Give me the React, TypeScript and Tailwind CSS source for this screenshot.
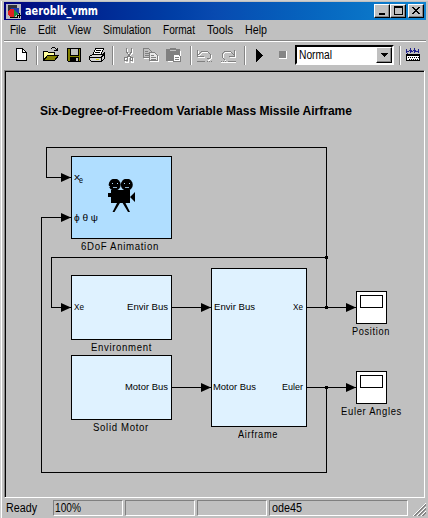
import React, { useLayoutEffect, useRef, useState } from "react";

type FitProps = { width: number; className?: string; children: React.ReactNode };

/** Single line of text, condensed or widened to an exact width. */
function Fit({ width, className = "", children }: FitProps) {
  const ref = useRef<HTMLSpanElement>(null);
  const [scale, setScale] = useState(1);
  useLayoutEffect(() => {
    if (ref.current && ref.current.offsetWidth) {
      const range = document.createRange();
      range.selectNodeContents(ref.current);
      const current = range.getBoundingClientRect().width;
      if (current) setScale((s) => (s * width) / current);
    }
  }, [width]);
  return (
    <span className={`block whitespace-nowrap ${className}`} style={{ width }}>
      <span ref={ref} className="inline-block origin-left" style={{ transform: `scaleX(${scale})` }}>
        {children}
      </span>
    </span>
  );
}

const menus: [string, number][] = [
  ["File", 16], ["Edit", 18], ["View", 23], ["Simulation", 48], ["Format", 32], ["Tools", 26], ["Help", 22],
];

const blocks = [
  { id: "anim", x: 71, y: 156, w: 101, h: 83, fill: "bg-[#b0deff]" },
  { id: "env", x: 71, y: 275, w: 101, h: 65, fill: "bg-[#dff2ff]" },
  { id: "motor", x: 71, y: 355, w: 101, h: 65, fill: "bg-[#dff2ff]" },
  { id: "airframe", x: 211, y: 268, w: 96, h: 159, fill: "bg-[#dff2ff]" },
  { id: "position", x: 356, y: 291, w: 31, h: 33, fill: "bg-white", scope: true },
  { id: "euler", x: 356, y: 371, w: 31, h: 33, fill: "bg-white", scope: true },
];

const labels = [
  { text: "6DoF Animation", x: 81, base: 250, w: 78, name: true },
  { text: "Environment", x: 91, base: 351, w: 61, name: true },
  { text: "Solid Motor", x: 93, base: 431, w: 56, name: true },
  { text: "Airframe", x: 238, base: 438, w: 40, name: true },
  { text: "Position", x: 352, base: 335, w: 38, name: true },
  { text: "Euler Angles", x: 341, base: 415, w: 61, name: true },
  { text: "Xe", x: 74, base: 310, w: 10 },
  { text: "Envir Bus", x: 127, base: 310, w: 41 },
  { text: "Motor Bus", x: 125, base: 390, w: 43 },
  { text: "Envir Bus", x: 214, base: 310, w: 41 },
  { text: "Motor Bus", x: 213, base: 390, w: 43 },
  { text: "Xe", x: 293, base: 310, w: 10 },
  { text: "Euler", x: 282, base: 390, w: 21 },
  { text: "x", x: 74, base: 180, w: 6 },
  { text: "e", x: 79, base: 183, w: 4 },
  { text: "ϕ θ ψ", x: 74, base: 221, w: 24 },
];

const arrows: [number, number][] = [[71, 177], [71, 217], [71, 307], [211, 307], [211, 387], [356, 307], [356, 387]];

function Wires() {
  return (
    <svg className="absolute inset-0" width="419" height="425" viewBox="6 72 419 425">
      <g fill="none" stroke="#000" shapeRendering="crispEdges">
        <path d="M326.5 307V147.5H46.5V177.5H71M326.5 257.5H51.5V307.5H71M171 307.5H211M171 387.5H211M306 307.5H356M306 387.5H356M326.5 387V472.5H41.5V217.5H71" />
      </g>
      {arrows.map(([x, y]) => (
        <path key={`${x}-${y}`} d={`M${x - 10} ${y - 4}L${x} ${y + 0.5}L${x - 10} ${y + 5}Z`} />
      ))}
      <path d="M325 256h3v3h-3zM325 306h3v3h-3zM325 386h3v3h-3z" />
    </svg>
  );
}

function Camera() {
  return (
    <svg className="absolute left-[36px] top-[22px]" width="29" height="35" viewBox="108 179 29 35">
      <circle cx="114.7" cy="184.7" r="6" />
      <circle cx="126.8" cy="184.7" r="6" />
      <path d="M111 190h19v13h-19zM108 193h4v4h-4zM130 197l5-5v10zM117.500 202h3l-6 10h-2zM122 202h3l5 10h-2z" />
      <path d="M113 187.500h4M125 187.500h4M108 186.500h2" stroke="#b0deff" strokeWidth="0.8" />
      <path d="M112 183h1v1h-1zM117 183h1v1h-1zM124 183h1v1h-1zM129 183h1v1h-1z" fill="#b0deff" />
    </svg>
  );
}

function Icon({ x, w, className = "", children }: { x: number; w: number; className?: string; children: React.ReactNode }) {
  return (
    <svg className={`shrink-0 ${className}`} width={w} height="18" viewBox={`${x} 46 ${w} 18`} shapeRendering="crispEdges" fill="none">
      {children}
    </svg>
  );
}

function Separator({ className }: { className: string }) {
  return <div className={`h-[19px] w-[2px] shrink-0 border-l border-r border-l-[#858585] border-r-white ${className}`} />;
}

function Toolbar() {
  return (
    <div className="flex h-[27px] items-center pb-px pl-[12px]">
      <Icon x={16} w={12}>
        <path d="M16.5 48.5h6l4 4v8h-10z" fill="#fff" stroke="#000" />
        <path d="M22.5 48.5v4h4" stroke="#000" />
      </Icon>
      <Separator className="ml-[8px]" />
      <Icon x={44} w={16} className="ml-[5px]">
        <path d="M44.5 59.5v-8h4l1 1h6v3" fill="#ffff9c" stroke="#000" />
        <path d="M44.5 60.5l4-5h11l-4 5z" fill="#848200" stroke="#000" />
        <path d="M52 48.5h1M53 47.5h3M56 48.5h1M57 49.5h1M55 50.5h4M58.5 48v3" stroke="#000" />
      </Icon>
      <Icon x={68} w={15} className="ml-[8px]">
        <path d="M68.5 48.5h13v13h-12l-1-1z" fill="#848200" stroke="#000" />
        <path d="M71.5 49v6.5h8v-6.500" fill="#c0c0c0" stroke="#000" />
        <path d="M71 57h9v4h-9z" fill="#000" />
        <path d="M77 58h2v3h-2z" fill="#c0c0c0" />
      </Icon>
      <Icon x={90} w={17} className="ml-[7px]">
        <path d="M96.5 48.5h8l-3 7h-8z" fill="#fff" stroke="#000" />
        <path d="M97 50.500h5M96 52.500h5" stroke="#000" />
        <path d="M90.5 56.5l3-2h10l2-2v6l-3 3h-10l-2-2z" fill="#d4d4d4" stroke="#000" />
        <path d="M91 57.500h11l3-3M93 61.500h9M102.500 57v4" stroke="#000" />
        <path d="M97 59.500h3" stroke="#dada00" />
      </Icon>
      <Separator className="ml-[6px]" />
      <Icon x={124} w={13} className="ml-[9px]">
        <g stroke="#fff" transform="translate(1 1)">
          <path d="M127.500 48v4l4 5M132.500 48v4l-4 5" /><path d="M125.500 57.500h3v4h-3zM131.500 57.500h2v4h-2z" />
        </g>
        <g stroke="#808080">
          <path d="M127.500 48v4l4 5M132.500 48v4l-4 5" /><path d="M125.500 57.500h3v3h-3zM131.500 57.500h2v3h-2z" />
        </g>
      </Icon>
      <Icon x={144} w={17} className="ml-[7px]">
        <g stroke="#fff" transform="translate(1 1)"><path d="M144.500 48.500h5l3 3v6h-8zM150.500 52.500h5l3 3v5h-8z" /></g>
        <path d="M144.500 48.500h5l3 3v6h-8z" fill="#c0c0c0" stroke="#808080" />
        <path d="M146 51.500h3M146 53.500h4M146 55.500h4" stroke="#808080" />
        <path d="M150.500 52.500h5l3 3v5h-8z" fill="#e8e8e8" stroke="#808080" />
        <path d="M152 55.500h3M152 57.500h5M152 59.500h5" stroke="#808080" />
      </Icon>
      <Icon x={167} w={17} className="ml-[6px]">
        <path d="M168 50h4v-2h5v2h4v11h-13z" fill="#fff" transform="translate(1 1)" />
        <path d="M167 49h4v-1h6v1h4v12h-14z" fill="#808080" />
        <path d="M171 50.500h6" stroke="#c0c0c0" />
        <path d="M174.500 54.500h5l2 2v5h-7z" fill="#fff" stroke="#808080" />
        <path d="M176 57.500h4M176 59.500h4" stroke="#808080" />
      </Icon>
      <Separator className="ml-[7px]" />
      <Icon x={197} w={18} className="ml-[4px]">
        <path d="M199.500 51v6h6M200 56l4-4h5l3 3v4l-3 2" stroke="#fff" />
        <path d="M198.500 50v6h6M199 55l4-4h5l3 3v4l-3 1M198 61.500h8M208 61.500h1M210 61.500h1M212 61.500h1" stroke="#808080" />
      </Icon>
      <Icon x={221} w={18} className="ml-[6px]">
        <path d="M236.500 51v6h-6M236 56l-4-4h-5l-3 3v3l3 3M222 62.500h15" stroke="#fff" />
        <path d="M235.500 50v6h-6M235 55l-4-4h-5l-3 3v3l3 3M229 61.500h8M222 61.500h1M224 61.500h1M226 61.500h1" stroke="#808080" />
      </Icon>
      <Separator className="ml-[6px]" />
      <Icon x={257} w={7} className="ml-[10px]"><path d="M257 49h1l6 6.500-6 6.500h-1z" fill="#000" /></Icon>
      <div className="ml-[16px] h-2 w-2 shrink-0 border-b border-r border-white bg-[#858585]" />
      <div className="ml-[8px] flex h-[20px] w-[99px] shrink-0 border-2 border-b-white border-l-black border-r-white border-t-black bg-white">
        <Fit width={33} className="ml-[2px] text-[12px] leading-[17px]">Normal</Fit>
        <div className="ml-auto flex w-[16px] items-center justify-center border border-b-black border-l-white border-r-black border-t-white bg-[#c0c0c0] shadow-[inset_-1px_-1px_0_#858585]">
          <svg width="7" height="4" shapeRendering="crispEdges"><path d="M0 0h7L3.500 4z" /></svg>
        </div>
      </div>
      <Separator className="ml-[5px]" />
      <Icon x={406} w={15} className="ml-[5px]">
        <path d="M406.500 49v4M410.500 48v4M414.500 48v4M418.500 49v4M406 51.500h3M410 51.500h3M414 51.500h5M409 50.500h3M413 50.500h3M407 53.500h1M410 52.500h1M414 52.500h1M418 52.500h1" stroke="#20208a" />
        <path d="M406.500 54.500h13v6h-13z" fill="#fff" stroke="#000" />
        <path d="M406 55.500h14" stroke="#000" />
        <path d="M408 57.500h11M409 59.500h10" stroke="#000" strokeDasharray="1 1" />
      </Icon>
    </div>
  );
}

function WindowButton({ children, className = "" }: { children: React.ReactNode; className?: string }) {
  return (
    <div className={`h-[14px] w-[16px] border border-b-black border-l-white border-r-black border-t-white bg-[#c0c0c0] shadow-[inset_-1px_-1px_0_#858585] ${className}`}>
      <svg width="14" height="12" shapeRendering="crispEdges" fill="none" stroke="#000">{children}</svg>
    </div>
  );
}

function StatusCell({ className, children }: { className: string; children?: React.ReactNode }) {
  return (
    <div className={`h-[16px] shrink-0 border border-b-white border-l-[#808080] border-r-white border-t-[#808080] pl-px text-[12px] leading-[15px] ${className}`}>
      {children}
    </div>
  );
}

export default function App() {
  return (
    <div className="flex h-[518px] w-[428px] flex-col overflow-hidden bg-[#c0c0c0] pl-[4px] pr-[2px] pt-[2px] font-['Liberation_Sans',Arial,sans-serif] text-black shadow-[inset_1px_1px_0_#d0d0d0,inset_2px_0_0_#fff]">
      <header className="flex h-[18px] shrink-0 items-center bg-linear-to-r from-[#00007d] via-[#084ab0] to-[#1084d0] pl-[2px] pr-[2px]">
        <svg className="mt-px" width="16" height="16" viewBox="0 0 16 16" shapeRendering="crispEdges">
          <path d="M0 0h15v15H0z" fill="#b8b8c0" /><path d="M2 1h9v8H2z" fill="#303038" />
          <path d="M5 4h8v6H5z" fill="#2038a8" /><circle cx="6" cy="9" r="4" fill="#e02020" />
          <path d="M8 6l5 4-5 3z" fill="#168b40" /><path d="M3.500 13.500h8v-3M11 11.500h4M13.500 9v5" stroke="#000" fill="none" />
        </svg>
        <Fit width={73} className="ml-[3px] font-['DejaVu_Sans_Condensed','DejaVu_Sans',sans-serif] text-[12px] font-bold leading-[18px] text-white">aeroblk_vmm</Fit>
        <div className="ml-auto flex">
          <WindowButton><path d="M4 9h6" strokeWidth="2" /></WindowButton>
          <WindowButton><path d="M3.500 2.500h8v7h-8zM3 1.500h9" /></WindowButton>
          <WindowButton className="ml-[2px]"><path d="M4 2l7 7M3 2l7 7M11 2l-7 7M10 2l-7 7" /></WindowButton>
        </div>
      </header>
      <nav className="flex h-[21px] shrink-0 items-center gap-[12px] border-b border-[#858585] pl-[6px] text-[12px] leading-[19px]">
        {menus.map(([name, width]) => <Fit key={name} width={width}>{name}</Fit>)}
      </nav>
      <div className="h-[29px] shrink-0 border-t border-white"><Toolbar /></div>
      <main className="mr-px h-[428px] shrink-0 border-b border-l border-r border-t border-b-white border-l-[#858585] border-r-white border-t-[#858585]">
        <div className="relative h-full border-l border-t border-black">
          <Wires />
          {blocks.map((b) => (
            <div key={b.id} className={`absolute border border-black ${b.fill}`} style={{ left: b.x - 6, top: b.y - 72, width: b.w, height: b.h }}>
              {b.scope && <div className="ml-[3px] mt-[3px] h-[13px] w-[23px] border border-black" />}
              {b.id === "anim" && <Camera />}
            </div>
          ))}
          <div className="absolute left-[34px] top-[32px]">
            <Fit width={312} className="text-[12px] font-bold leading-[14px]">Six-Degree-of-Freedom Variable Mass Missile Airframe</Fit>
          </div>
          {labels.map((l) => (
            <div key={`${l.text}-${l.x}`} className="absolute" style={{ left: l.x - 6, top: l.base - 72 - 9 }}>
              <Fit width={l.w} className={l.name ? "text-[10px] leading-[12px] tracking-[0.7px]" : "text-[9.5px] leading-[12px]"}>{l.text}</Fit>
            </div>
          ))}
        </div>
      </main>
      <footer className="flex h-[20px] shrink-0 items-start pl-[2px] pt-[2px]">
        <Fit width={31} className="text-[12px] leading-[16px]">Ready</Fit>
        <StatusCell className="ml-[16px] w-[70px]"><Fit width={26}>100%</Fit></StatusCell>
        <StatusCell className="ml-[2px] w-[70px]" />
        <StatusCell className="ml-[2px] w-[70px]" />
        <StatusCell className="ml-[2px] w-[139px]"><Fit width={30} className="ml-px">ode45</Fit></StatusCell>
        <svg className="ml-[5px] mt-[3px]" width="13" height="13" fill="none">
          <path d="M0 13L13 0M4 13l9-9M8 13l5-5" stroke="#fff" /><path d="M1 13L13 1M2 13L13 2M5 13l8-8M6 13l7-7M9 13l4-4M10 13l3-3" stroke="#858585" />
        </svg>
      </footer>
    </div>
  );
}
